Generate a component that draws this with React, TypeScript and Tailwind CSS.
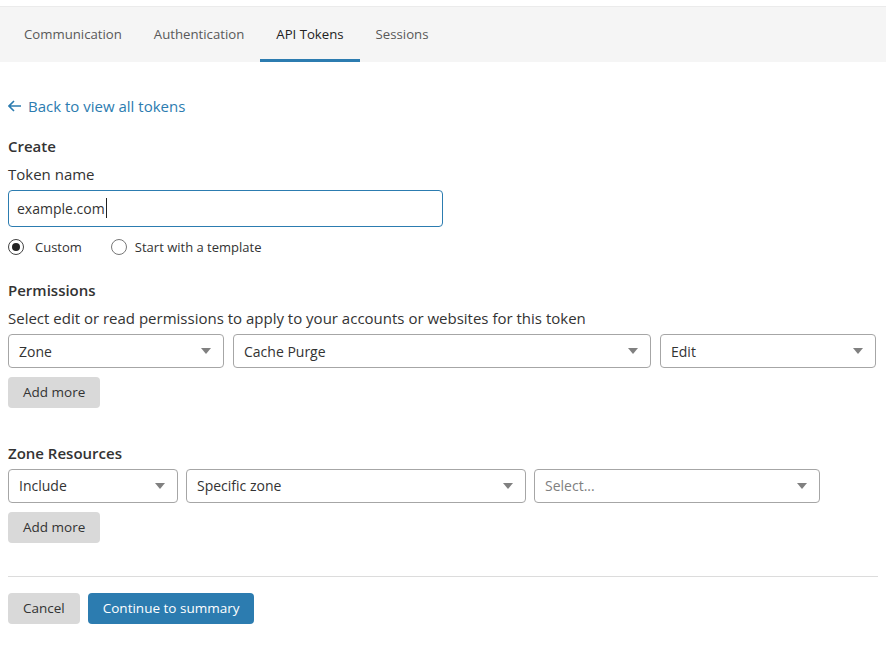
import React from 'react';

const tabs = ['Communication', 'Authentication', 'API Tokens', 'Sessions'];

function Caret() {
  return (
    <svg width="10" height="6" viewBox="0 0 10 6" className="shrink-0">
      <path d="M0 0 L10 0 L5 6 Z" fill="#808080" />
    </svg>
  );
}

function SelectBox({ value, width, placeholder }: { value: string; width: string; placeholder?: boolean }) {
  return (
    <div
      className={`${width} h-[34px] flex items-center justify-between pl-[10px] pr-[12px] border border-[#a6a6a6] rounded-[4px] bg-white text-[14px] ${
        placeholder ? 'text-[#808080]' : 'text-[#333]'
      }`}
    >
      <span>{value}</span>
      <Caret />
    </div>
  );
}

function GrayButton({ children }: { children: React.ReactNode }) {
  return (
    <button className="h-[31px] px-[15px] rounded-[4px] bg-[#d9d9d9] text-[13.5px] text-[#333]">{children}</button>
  );
}

export default function App() {
  return (
    <div className="w-[886px] min-h-[645px] bg-white text-[#333]" style={{ fontFamily: '"Open Sans", sans-serif' }}>
      {/* Tabs */}
      <div className="mt-[6px] border-t border-[#ebebeb] bg-[#f5f5f5] h-[56px] flex pl-2">
        {tabs.map((t) => {
          const active = t === 'API Tokens';
          return (
            <div
              key={t}
              className={`px-4 flex items-center text-[13.2px] border-b-[3px] ${
                active ? 'border-[#2c7cb0] text-[#222]' : 'border-transparent text-[#595959]'
              }`}
            >
              <span className="mt-[3px]">{t}</span>
            </div>
          );
        })}
      </div>

      <div className="px-2">
        {/* Back link */}
        <div className="mt-[33px] flex items-center gap-[6px] text-[15px] text-[#2c7cb0]">
          <svg width="14" height="12" viewBox="0 0 14 12" fill="none" stroke="#2c7cb0" strokeWidth="1.6">
            <path d="M13 6 H1.5 M6 1 L1 6 L6 11" />
          </svg>
          <span>Back to view all tokens</span>
        </div>

        {/* Create */}
        <div className="mt-[17px] text-[15px] font-semibold text-[#333]">Create</div>
        <div className="mt-[6px] text-[15px] text-[#333]">Token name</div>
        <div className="mt-[4px] w-[435px] h-[37px] border border-[#2c7cb0] rounded-[4px] flex items-center px-2 text-[14px] text-[#333]">
          <span>example.com</span>
          <span className="w-px h-[20px] bg-[#222] ml-px" />
        </div>

        <div className="mt-[11px] flex items-center text-[13px] text-[#333]">
          <div className="w-[16px] h-[16px] rounded-full border border-[#444] flex items-center justify-center">
            <div className="w-[8px] h-[8px] rounded-full bg-[#222]" />
          </div>
          <span className="ml-[11px]">Custom</span>
          <div className="ml-[29px] w-[16px] h-[16px] rounded-full border border-[#777]" />
          <span className="ml-[8px]">Start with a template</span>
        </div>

        {/* Permissions */}
        <div className="mt-[22px] text-[15px] font-semibold">Permissions</div>
        <div className="mt-[5px] text-[15px]">Select edit or read permissions to apply to your accounts or websites for this token</div>
        <div className="mt-[5px] flex gap-[9px]">
          <SelectBox value="Zone" width="w-[216px]" />
          <SelectBox value="Cache Purge" width="w-[418px]" />
          <SelectBox value="Edit" width="w-[216px]" />
        </div>
        <div className="mt-[9px]">
          <GrayButton>Add more</GrayButton>
        </div>

        {/* Zone Resources */}
        <div className="mt-[34px] text-[15px] font-semibold">Zone Resources</div>
        <div className="mt-[4px] flex gap-[8px]">
          <SelectBox value="Include" width="w-[170px]" />
          <SelectBox value="Specific zone" width="w-[340px]" />
          <SelectBox value="Select..." width="w-[286px]" placeholder />
        </div>
        <div className="mt-[9px]">
          <GrayButton>Add more</GrayButton>
        </div>

        <div className="mt-[33px] border-t border-[#dcdcdc]" />

        <div className="mt-[16px] flex gap-2">
          <GrayButton>Cancel</GrayButton>
          <button className="h-[31px] px-[15px] rounded-[4px] bg-[#2c7cb0] text-[13.5px] text-white">Continue to summary</button>
        </div>
      </div>
    </div>
  );
}
